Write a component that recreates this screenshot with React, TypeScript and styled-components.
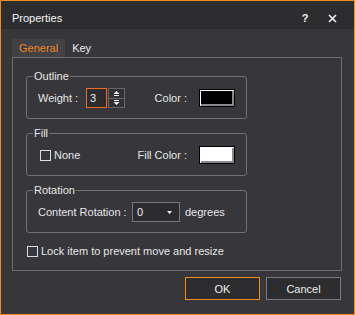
import React from "react";
import styled, { createGlobalStyle } from "styled-components";

const GlobalStyle = createGlobalStyle`
  html, body { margin: 0; padding: 0; background: #37363b; }
  body { font-family: "Liberation Sans", Arial, sans-serif; }
  * { box-sizing: border-box; }
`;

const Window = styled.div`
  width: 355px;
  height: 315px;
  border: 1px solid #f58a1f;
  background: #37363b;
  display: flex;
  flex-direction: column;
  font-family: "Liberation Sans", Arial, sans-serif;
  font-size: 11px;
  color: #e6e6e6;
`;

const TitleBar = styled.div`
  height: 28px;
  flex: none;
  background: #2d2d30;
  display: flex;
  align-items: center;
  gap: 15px;
  padding: 6px 16px 0 11px;
`;

const Title = styled.div`
  flex: 1;
  color: #f4f4f4;
  line-height: 13px;
`;

const IconBox = styled.div`
  width: 12px;
  height: 13px;
  display: flex;
  align-items: center;
  justify-content: center;
  color: #f4f4f4;
  font-weight: bold;
  line-height: 13px;
`;

const Body = styled.div`
  flex: 1;
  display: flex;
  flex-direction: column;
  padding: 10px 12px 0 11px;
`;

const TabBar = styled.div`
  display: flex;
  height: 18px;
`;

const Tab = styled.div<{ $active?: boolean }>`
  padding: 0 7px;
  line-height: 18px;
  background: ${(p) => (p.$active ? "#424146" : "transparent")};
  color: ${(p) => (p.$active ? "#f0861f" : "#ececec")};
`;

const Panel = styled.div`
  height: 214px;
  border: 1px solid #6c6c6c;
  padding: 12px 0 0 13px;
  display: flex;
  flex-direction: column;
  gap: 8px;
`;

const Group = styled.fieldset`
  margin: 0;
  width: 221px;
  min-inline-size: auto;
  border: 1px solid #717171;
  border-radius: 3px;
  padding: 5px 11px 10px 6px;
`;

const Legend = styled.legend`
  padding: 0 1px;
  line-height: 13px;
  font-size: 11px;
  color: #e6e6e6;
`;

const Row = styled.div`
  display: flex;
  align-items: center;
  height: 20px;
  padding-left: 5px;
`;

const Label = styled.span<{ $w?: number }>`
  flex: none;
  width: ${(p) => (p.$w ? `${p.$w}px` : "auto")};
  line-height: 13px;
  white-space: nowrap;
`;

const RightGroup = styled.div`
  margin-left: auto;
  display: flex;
  align-items: center;
  gap: 12px;
`;

const Swatch = styled.div<{ $color: string }>`
  width: 36px;
  height: 18px;
  border: 1px solid #000;
  background: ${(p) => p.$color};
  box-shadow: inset 1px 1px 0 #ffffff, inset -2px -2px 0 #8a8a8a;
`;

const NumberBox = styled.div`
  width: 21px;
  height: 20px;
  border: 1px solid #ee6a1d;
  background: #2c2c2f;
  padding-left: 3px;
  line-height: 18px;
  color: #f0f0f0;
`;

const Spinner = styled.div`
  margin-left: 1px;
  width: 17px;
  height: 20px;
  border: 1px solid #666669;
  background: #666669;
  display: grid;
  grid-template-rows: 1fr 1fr;
  gap: 1px;
`;

const SpinCell = styled.div`
  background: #313034;
  display: flex;
  align-items: center;
  justify-content: center;
`;

const CheckBox = styled.span<{ $ml?: number }>`
  flex: none;
  width: 11px;
  height: 11px;
  margin-left: ${(p) => p.$ml ?? 0}px;
  border: 1px solid #dcdcdc;
`;

const CheckLabel = styled.span`
  margin-left: 3px;
  line-height: 13px;
  white-space: nowrap;
`;

const Dropdown = styled.div`
  width: 48px;
  height: 20px;
  border: 1px solid #777779;
  background: #2c2c2f;
  display: flex;
  align-items: center;
  padding: 0 7px 0 4px;
  color: #f0f0f0;
`;

const DropValue = styled.span`
  flex: 1;
  line-height: 13px;
`;

const Unit = styled.span`
  margin-left: 5px;
  line-height: 13px;
`;

const LockRow = styled.div`
  display: flex;
  align-items: center;
  height: 13px;
  margin-top: 4px;
  padding-left: 1px;
`;

const ButtonRow = styled.div`
  display: flex;
  justify-content: flex-end;
  gap: 6px;
  margin-top: 6px;
  padding-right: 1px;
`;

const Button = styled.button<{ $primary?: boolean }>`
  width: 75px;
  height: 23px;
  border: 1px solid ${(p) => (p.$primary ? "#f08a1f" : "#7b7b7d")};
  background: #2d2d30;
  color: #ececec;
  font-family: "Liberation Sans", Arial, sans-serif;
  font-size: 11px;
  padding: 0;
`;

const UpArrow = () => (
  <svg width="7" height="5" viewBox="0 0 7 5">
    <polygon points="0.5,3 3.5,0 6.5,3" fill="#f0f0f0" />
    <rect x="1" y="4" width="5" height="1" fill="#f0f0f0" />
  </svg>
);

const DownArrow = () => (
  <svg width="7" height="5" viewBox="0 0 7 5">
    <rect x="1" y="0" width="5" height="1" fill="#f0f0f0" />
    <polygon points="0.5,2 3.5,5 6.5,2" fill="#f0f0f0" />
  </svg>
);

const Caret = () => (
  <svg width="5" height="3" viewBox="0 0 5 3">
    <polygon points="0,0 5,0 2.5,3" fill="#f0f0f0" />
  </svg>
);

const CloseIcon = () => (
  <svg width="9" height="9" viewBox="0 0 9 9">
    <path d="M1 1 L8 8 M8 1 L1 8" stroke="#f4f4f4" strokeWidth="1.6" />
  </svg>
);

export default function App() {
  return (
    <>
      <GlobalStyle />
      <Window>
        <TitleBar>
          <Title>Properties</Title>
          <IconBox>?</IconBox>
          <IconBox>
            <CloseIcon />
          </IconBox>
        </TitleBar>
        <Body>
          <TabBar>
            <Tab $active>General</Tab>
            <Tab>Key</Tab>
          </TabBar>
          <Panel>
            <Group>
              <Legend>Outline</Legend>
              <Row>
                <Label $w={48}>Weight :</Label>
                <NumberBox>3</NumberBox>
                <Spinner>
                  <SpinCell>
                    <UpArrow />
                  </SpinCell>
                  <SpinCell>
                    <DownArrow />
                  </SpinCell>
                </Spinner>
                <RightGroup>
                  <Label>Color :</Label>
                  <Swatch $color="#000000" />
                </RightGroup>
              </Row>
            </Group>
            <Group>
              <Legend>Fill</Legend>
              <Row>
                <CheckBox $ml={2} />
                <CheckLabel>None</CheckLabel>
                <RightGroup>
                  <Label>Fill Color :</Label>
                  <Swatch $color="#ffffff" />
                </RightGroup>
              </Row>
            </Group>
            <Group>
              <Legend>Rotation</Legend>
              <Row>
                <Label $w={94}>Content Rotation :</Label>
                <Dropdown>
                  <DropValue>0</DropValue>
                  <Caret />
                </Dropdown>
                <Unit>degrees</Unit>
              </Row>
            </Group>
            <LockRow>
              <CheckBox />
              <CheckLabel>Lock item to prevent move and resize</CheckLabel>
            </LockRow>
          </Panel>
          <ButtonRow>
            <Button $primary>OK</Button>
            <Button>Cancel</Button>
          </ButtonRow>
        </Body>
      </Window>
    </>
  );
}
